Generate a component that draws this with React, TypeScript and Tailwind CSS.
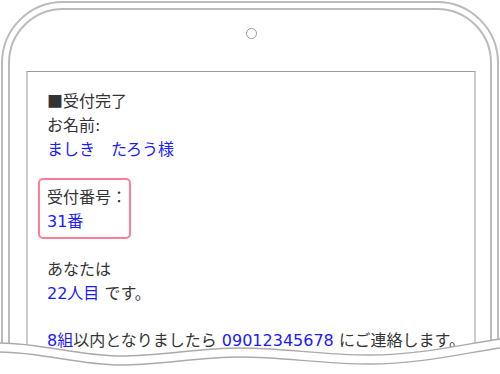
const wave = (dy: number) =>
  `M0,${9 + dy} C40,${9 + dy} 80,${22 + dy} 120,${22 + dy} C160,${22 + dy} 200,${14 + dy} 240,${14 + dy} C285,${14 + dy} 320,${21 + dy} 370,${21 + dy} C420,${21 + dy} 465,${10 + dy} 500,${5 + dy}`;

function Wave() {
  return (
    <svg
      className="absolute bottom-0 left-0"
      width="500"
      height="40"
      viewBox="0 0 500 40"
    >
      <path d={`${wave(0)} L500,40 L0,40 Z`} fill="#fff" />
      <path d={wave(0)} fill="none" stroke="#aaa" strokeWidth="1.3" />
      <path d={wave(9)} fill="none" stroke="#aaa" strokeWidth="1.3" />
    </svg>
  );
}

export default function App() {
  return (
    <div className="relative h-[374px] w-[500px] overflow-hidden bg-white font-['DejaVu_Sans','Noto_Sans_CJK_JP',sans-serif] text-[16px] leading-[24px] text-[#333]">
      {/* phone frame */}
      <div className="mx-[1px] mt-[1px] h-[420px] rounded-t-[62px] border-2 border-[#bbb]">
        <div className="m-[5px] h-[400px] rounded-t-[55px] border-2 border-[#bbb] pl-[16px] pr-[14px] pt-[18px]">
          <div className="mx-auto h-[11px] w-[11px] rounded-full border border-[#999]" />

          {/* screen */}
          <div className="mt-[32px] h-[400px] border-x-2 border-t border-[#ccc] border-t-[#999] pl-[19px] pt-[16px]">
            <div>
              <span className="font-['Noto_Sans_CJK_JP',sans-serif]">■</span>受付完了
            </div>
            <div>お名前:</div>
            <div className="text-[#1a1aff]">ましき　たろう様</div>
            <div className="h-[24px]" />
            <div className="-mb-[5px] -ml-[9px] -mt-[8px] w-fit rounded-[5px] border-2 border-[#ff7d98] pb-[3px] pl-[7px] pr-[2px] pt-[6px]">
              <div>受付番号：</div>
              <div className="text-[#1a1aff]">31番</div>
            </div>
            <div className="h-[24px]" />
            <div>あなたは</div>
            <div>
              <span className="text-[#1a1aff]">22人目</span> です。
            </div>
            <div className="h-[24px]" />
            <div className="-mt-[1px]">
              <span className="text-[#1a1aff]">8組</span>以内となりましたら{" "}
              <span className="text-[#1a1aff]">09012345678</span> にご連絡します。
            </div>
          </div>
        </div>
      </div>
      <Wave />
    </div>
  );
}
